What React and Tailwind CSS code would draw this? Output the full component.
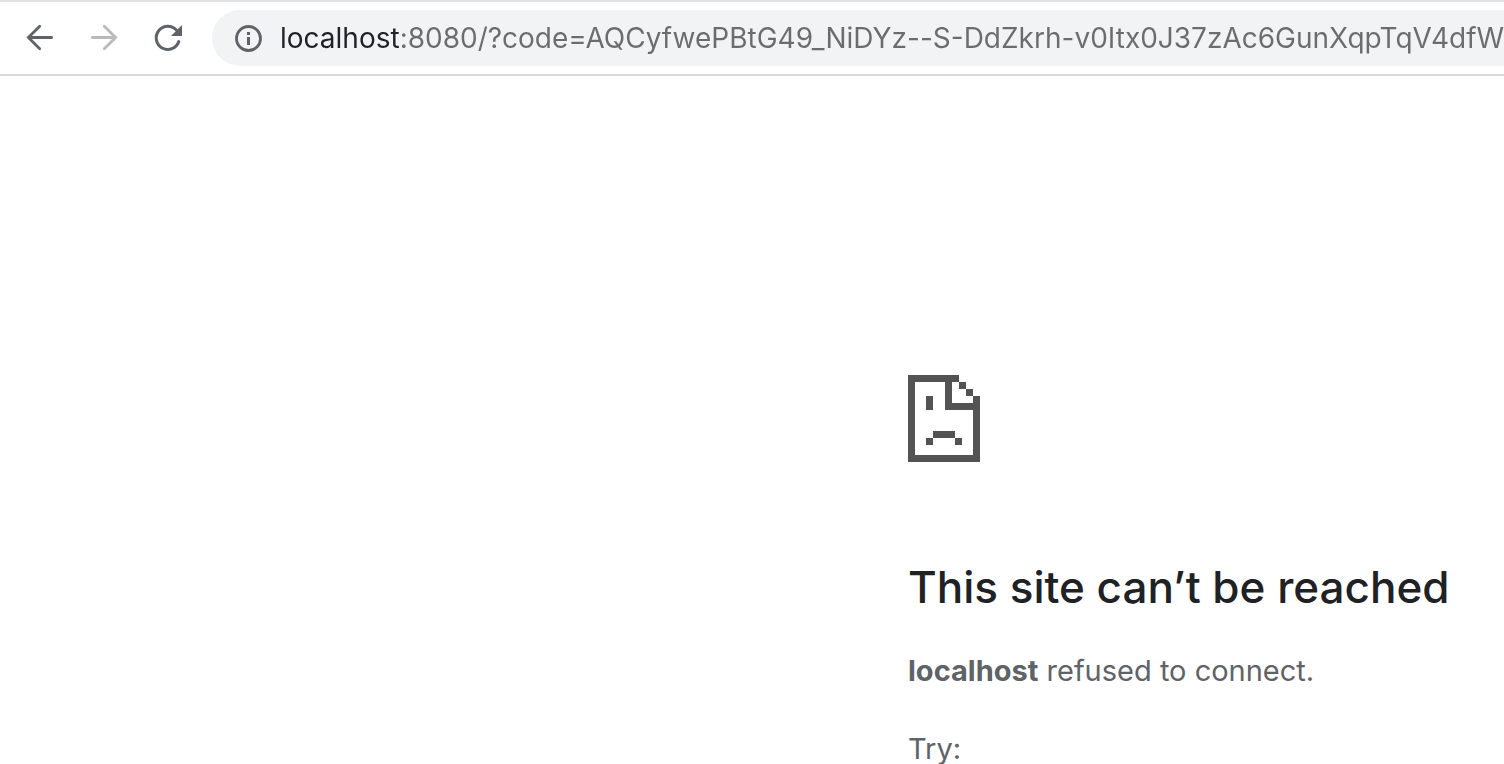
import React, { useState } from 'react';

const START_URL =
  'localhost:8080/?code=AQCyfwePBtG49_NiDYz--S-DdZkrh-v0Itx0J37zAc6GunXqpTqV4dfWI';

function BackIcon() {
  return (
    <svg width="32" height="32" viewBox="0 0 32 32" fill="none" stroke="currentColor" strokeWidth="2.8" strokeLinecap="round" aria-hidden="true">
      <path d="M15.7 4.2 4.4 15.5 15.7 26.8M4.4 15.5H27.6" />
    </svg>
  );
}

function ForwardIcon() {
  return (
    <svg width="32" height="32" viewBox="0 0 32 32" fill="none" stroke="currentColor" strokeWidth="2.8" strokeLinecap="round" aria-hidden="true">
      <path d="M16.3 4.2 27.6 15.5 16.3 26.8M27.6 15.5H4.4" />
    </svg>
  );
}

function ReloadIcon() {
  return (
    <svg width="32" height="32" viewBox="0 0 32 32" aria-hidden="true">
      <path d="M26.8 19.6A11.6 11.6 0 1 1 24.7 8.4" fill="none" stroke="currentColor" strokeWidth="3" strokeLinecap="round" />
      <path d="M30 3v11H19z" fill="currentColor" />
    </svg>
  );
}

function InfoIcon() {
  return (
    <svg width="28" height="28" viewBox="0 0 28 28" aria-hidden="true">
      <circle cx="14.5" cy="14.5" r="12" fill="none" stroke="currentColor" strokeWidth="2.8" />
      <path d="M13 8h3v3h-3zM13 13h3v8h-3z" fill="currentColor" />
    </svg>
  );
}

function SadPageIcon() {
  return (
    <svg width="72" height="87" viewBox="0 0 72 87" fill="#535353" shapeRendering="crispEdges" aria-hidden="true">
      <path d="M0 0h51v7h-7v21h21v-7h7v66H0zM7 7v73h58V35H37V7z" />
      <path d="M51 7h7v7h-7zM58 14h7v7h-7z" />
      <path d="M18 21h7v14h-7zM25 56h22v7H25zM18 63h7v7h-7zM47 63h7v7h-7z" />
    </svg>
  );
}

function Toolbar() {
  const [url, setUrl] = useState(START_URL);

  return (
    <header className="flex items-center h-[76px] border-t-2 border-t-[#e1e0e6] border-b-2 border-b-[#dadada] bg-white pl-2 text-[#5f6368]">
      <nav className="flex shrink-0">
        <button type="button" aria-label="Back" className="flex w-16 h-14 items-center justify-center">
          <BackIcon />
        </button>
        <button type="button" aria-label="Forward" disabled className="flex w-16 h-14 items-center justify-center text-[#bababa]">
          <ForwardIcon />
        </button>
        <button type="button" aria-label="Reload" className="flex w-16 h-14 items-center justify-center">
          <ReloadIcon />
        </button>
      </nav>

      <div className="flex flex-1 min-w-0 items-center h-14 ml-3 pl-[22px] rounded-l-full bg-[#f1f3f4]">
        <button type="button" aria-label="View site information" className="shrink-0">
          <InfoIcon />
        </button>
        {/* the host is darker than the rest of the address */}
        <input
          type="text"
          aria-label="Address"
          value={url}
          onChange={(e) => setUrl(e.target.value)}
          spellCheck={false}
          className="flex-1 min-w-0 h-14 ml-[18px] text-[28px] outline-none text-transparent bg-clip-text bg-[linear-gradient(to_right,#202124_120px,#6b6c6e_120px)]"
        />
      </div>
    </header>
  );
}

function ErrorPage() {
  return (
    <main className="grid grid-cols-[908fr_596fr] pt-[299px]">
      <div className="col-start-2 whitespace-nowrap text-[29px] leading-[46px] text-[#5f6368]">
        <SadPageIcon />
        <h1 className="mt-24 text-[44px] leading-[58px] font-medium text-[#202124]">
          This site can’t be reached
        </h1>
        <p className="mt-8">
          <strong className="font-bold">localhost</strong> refused to connect.
        </p>
        <p className="mt-8">Try:</p>
      </div>
    </main>
  );
}

export default function App() {
  return (
    <div className="h-screen overflow-hidden bg-white font-['Inter',sans-serif]">
      <Toolbar />
      <ErrorPage />
    </div>
  );
}
